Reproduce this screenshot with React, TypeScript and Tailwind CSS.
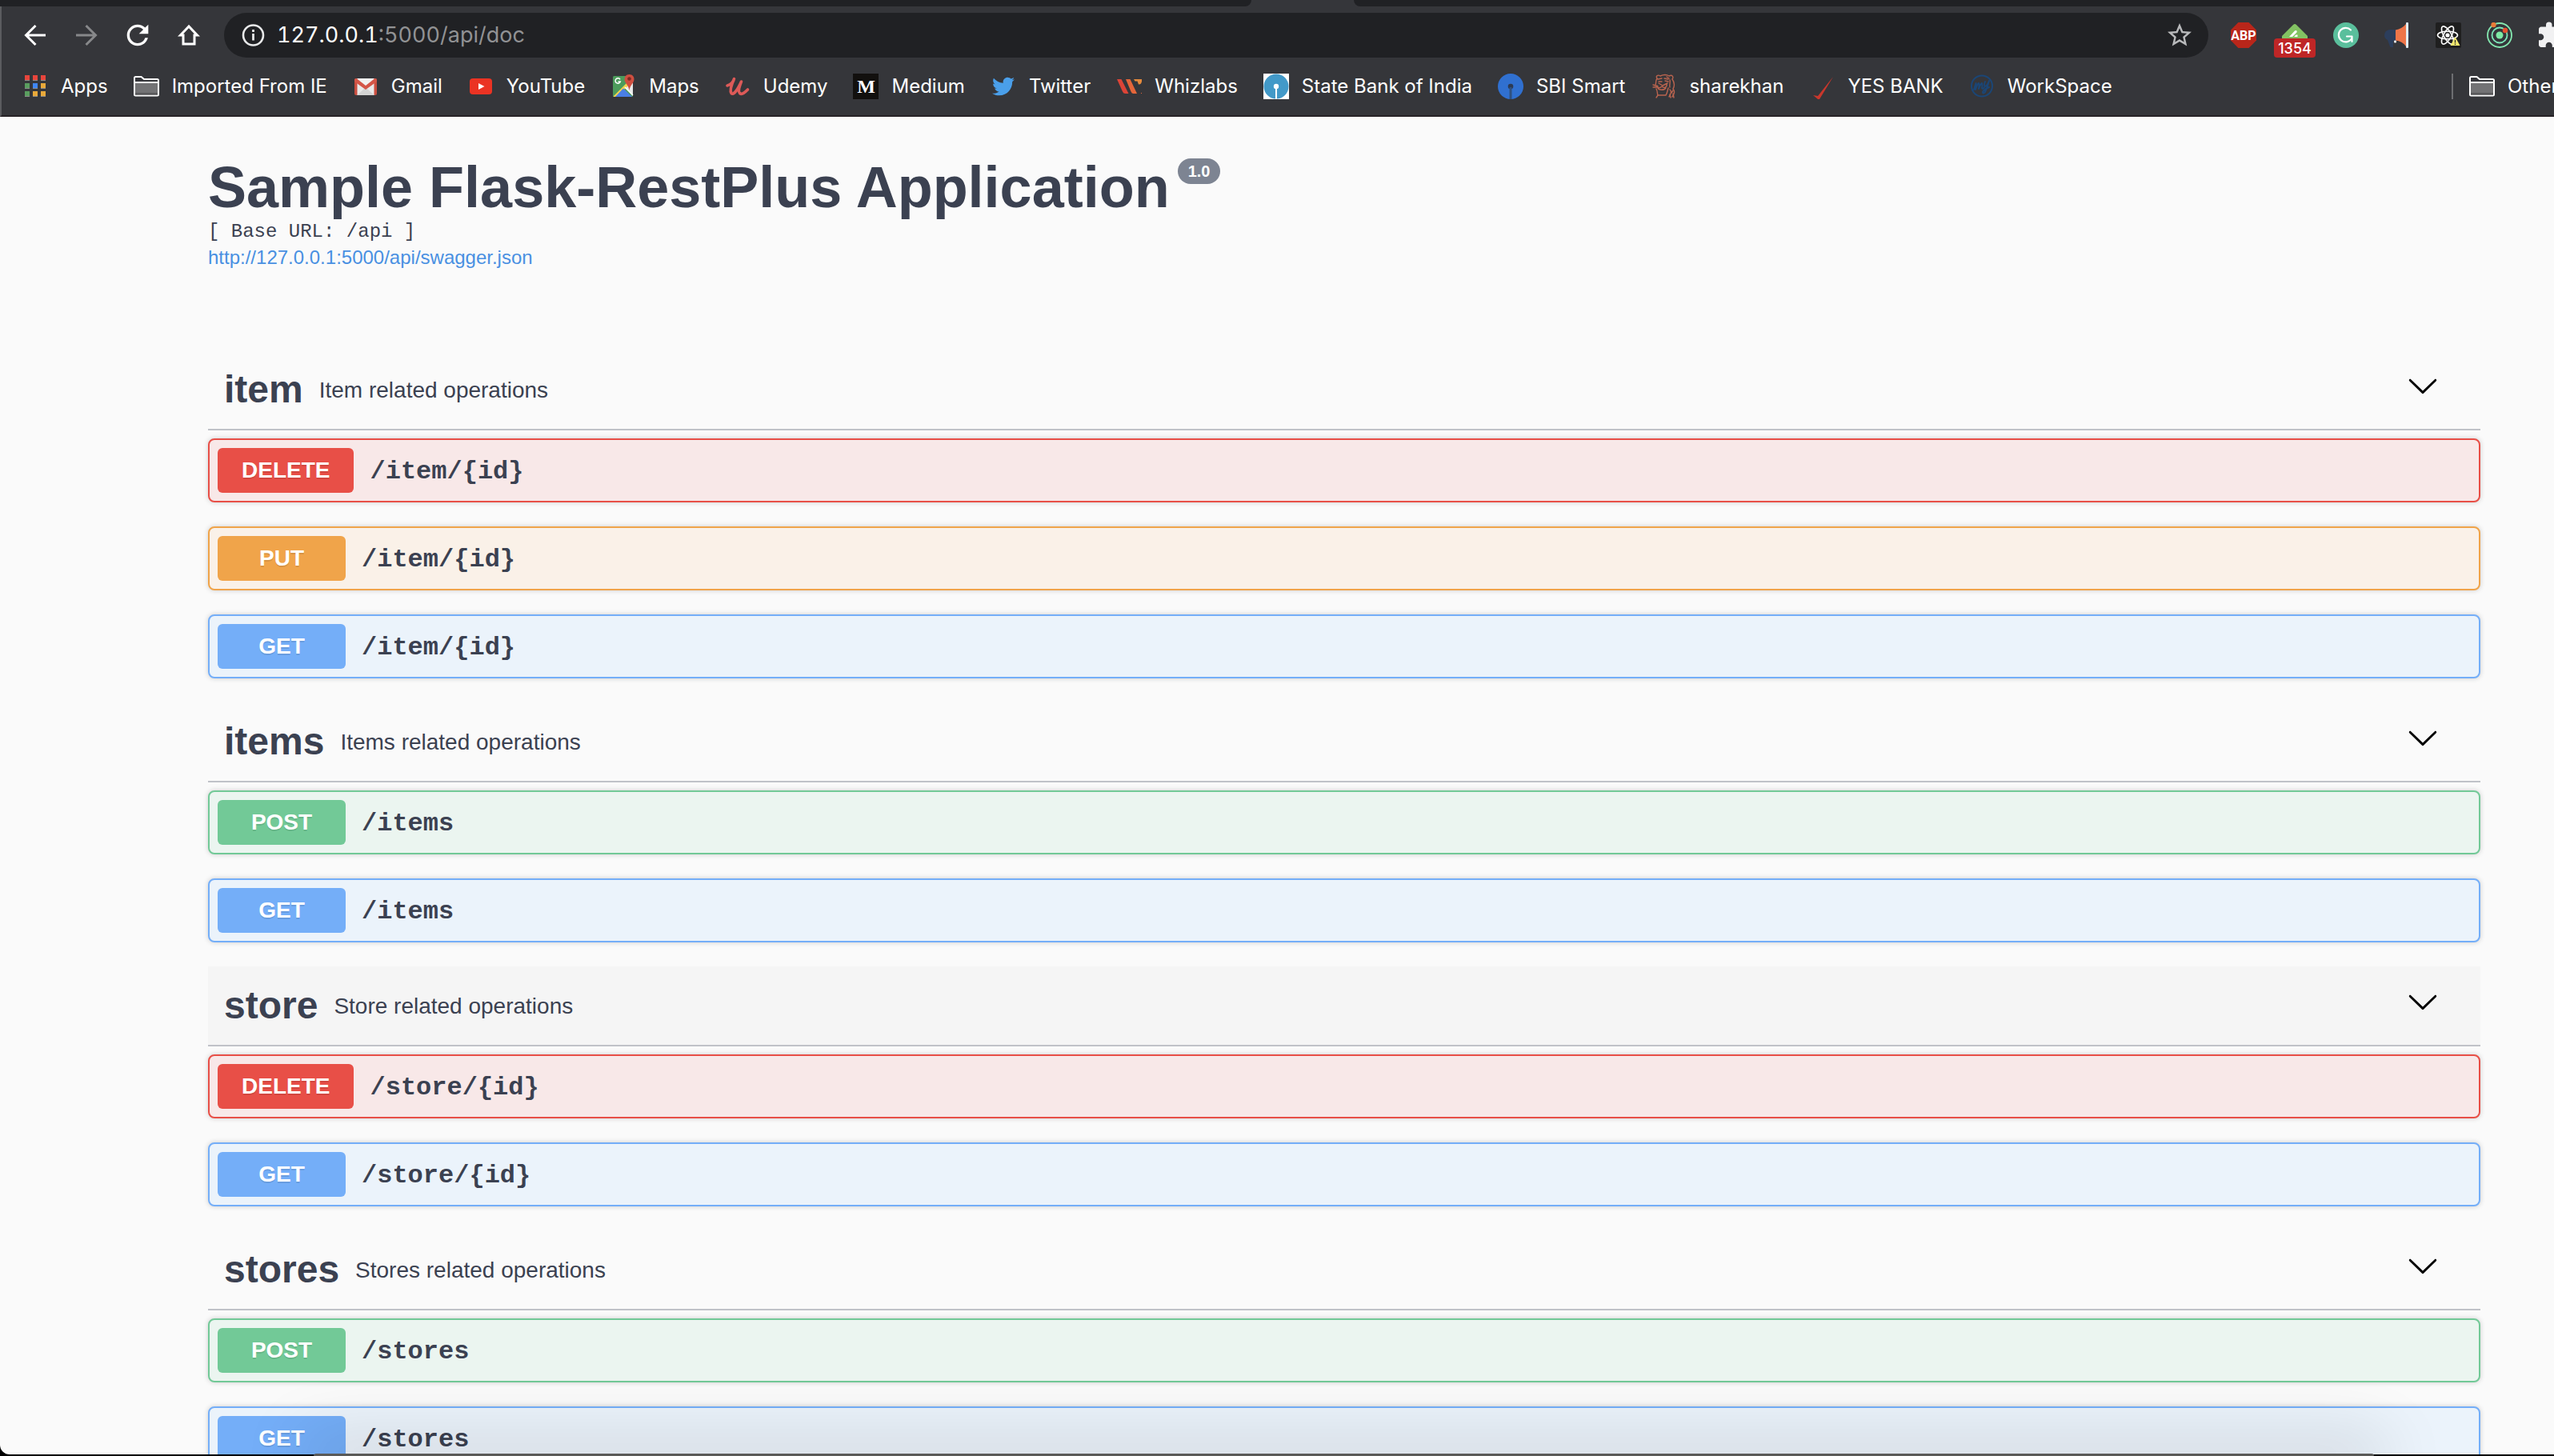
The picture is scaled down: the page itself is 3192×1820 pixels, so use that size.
import type { ReactNode } from "react";
import { FaTwitter } from "react-icons/fa";
import { MdExtension, MdRefresh, MdStarBorder } from "react-icons/md";

type Method = "DELETE" | "PUT" | "GET" | "POST";

const methodStyles: Record<Method, { card: string; badge: string }> = {
  DELETE: { card: "border-[#e84f47] bg-[#f8e8e8]", badge: "bg-[#e84f47]" },
  PUT: { card: "border-[#f0a44a] bg-[#faf1e8]", badge: "bg-[#f0a44a]" },
  GET: { card: "border-[#74aef8] bg-[#ebf3fb]", badge: "bg-[#74aef8]" },
  POST: { card: "border-[#72c997] bg-[#ebf5f0]", badge: "bg-[#72c997]" },
};

const sections: {
  name: string;
  description: string;
  hovered?: boolean;
  operations: { method: Method; path: string }[];
}[] = [
  {
    name: "item",
    description: "Item related operations",
    operations: [
      { method: "DELETE", path: "/item/{id}" },
      { method: "PUT", path: "/item/{id}" },
      { method: "GET", path: "/item/{id}" },
    ],
  },
  {
    name: "items",
    description: "Items related operations",
    operations: [
      { method: "POST", path: "/items" },
      { method: "GET", path: "/items" },
    ],
  },
  {
    name: "store",
    description: "Store related operations",
    hovered: true,
    operations: [
      { method: "DELETE", path: "/store/{id}" },
      { method: "GET", path: "/store/{id}" },
    ],
  },
  {
    name: "stores",
    description: "Stores related operations",
    operations: [
      { method: "POST", path: "/stores" },
      { method: "GET", path: "/stores" },
    ],
  },
];

function Icon({ children }: { children: ReactNode }) {
  return (
    <svg viewBox="0 0 32 32" className="size-8 shrink-0" fill="none" aria-hidden="true">
      {children}
    </svg>
  );
}

function AppsIcon() {
  const colors = ["#e8453c", "#e8453c", "#e8453c", "#5a9e5f", "#3f86f4", "#e9a93a", "#5a9e5f", "#e9a93a", "#e9a93a"];
  return (
    <Icon>
      {colors.map((color, i) => (
        <g key={i}>
          <rect x={3 + (i % 3) * 10} y={2 + Math.floor(i / 3) * 10} width="6" height="7" fill="#8b8b8b" />
          <rect x={3 + (i % 3) * 10} y={2 + Math.floor(i / 3) * 10} width="6" height="6" fill={color} />
        </g>
      ))}
    </Icon>
  );
}

function FolderIcon() {
  return (
    <Icon>
      <path d="M1 10V5.500Q1 4 2.500 4H9.500L13 7H29.500Q31 7 31 8.500V26Q31 27.500 29.500 27.500H2.500Q1 27.500 1 26Z" stroke="#fff" strokeWidth="2" />
      <rect x="2" y="12" width="28" height="12.500" fill="#737375" />
      <rect x="2" y="24.500" width="28" height="2" fill="#5b5b5d" />
      <path d="M1 11H31" stroke="#fff" strokeWidth="2" />
    </Icon>
  );
}

function GmailIcon() {
  return (
    <Icon>
      <rect x="2" y="6" width="28" height="21" rx="2" fill="#c94f41" />
      <path d="M5.500 6H26.500V27H5.500Z" fill="#e9e9e9" />
      <path d="M5.500 27L16 17L26.500 27Z" fill="#d3d3d3" />
      <path d="M2 7.500Q2.500 6 4.500 6L16 15L27.500 6Q29.500 6 30 7.500V10L16 20L2 10Z" fill="#d45648" />
      <path d="M5.500 6H26.500L16 14.500Z" fill="#f2f2f2" />
    </Icon>
  );
}

function YouTubeIcon() {
  return (
    <Icon>
      <rect x="2" y="6" width="28" height="20" rx="4" fill="#eb3323" />
      <path d="M13 12L20.500 16L13 20Z" fill="#fff" />
    </Icon>
  );
}

function MapsIcon() {
  return (
    <Icon>
      <rect x="3" y="3" width="25" height="26" rx="1.500" fill="#4c9b5b" />
      <path d="M28 11V28L17 16Z" fill="#e8e8e8" />
      <path d="M3.500 28.500L22 10L24.500 13L7 29H4Z" fill="#f3d34f" />
      <path d="M6 29L16 18.500L27 29Z" fill="#4a7fe6" />
      <path d="M18 17L28 27" stroke="#fff" strokeWidth="1.500" />
      <path d="M12 7.300A3.200 3.200 0 1 0 12.300 10H9.500" stroke="#fff" strokeWidth="1.500" />
      <path d="M23.500 1C19.500 1 17.500 4 17.500 7C17.500 12 22.500 14 23.500 21C24.500 14 29.500 12 29.500 7C29.500 4 27.500 1 23.500 1Z" fill="#cf4f40" />
      <circle cx="23.500" cy="6.500" r="2.300" fill="#7c2a22" />
    </Icon>
  );
}

function UdemyIcon() {
  return (
    <Icon>
      <path
        d="M3 15C7 14 11 10 11.500 6.500C9.500 11 5.500 21 8 24.500C10.500 27.500 15.500 21 20.500 10C18 16 16 22 18.500 24.500C21.500 27 25 23.500 28.500 20"
        stroke="#dd5a58"
        strokeWidth="3.600"
        strokeLinecap="round"
        strokeLinejoin="round"
      />
    </Icon>
  );
}

function MediumIcon() {
  return (
    <span
      className="flex size-8 shrink-0 items-center justify-center bg-[#12100e] font-['Liberation_Serif',serif] text-[24px] leading-8 font-bold text-white"
      aria-hidden="true"
    >
      M
    </span>
  );
}

function WhizlabsIcon() {
  return (
    <Icon>
      <path d="M1 7H6.500L15.500 25H11.500Q9 25 8 22.500Z" fill="#dc4437" />
      <path d="M12 7H17.500L26 25H31V24H32V25H21.500Q19.500 25 18.500 22.500Z" fill="#e4663a" />
      <path d="M22 7H32V10Q31 14 28 13.500L26.500 9.500H23.500Z" fill="#e58a3c" />
    </Icon>
  );
}

function StateBankIcon() {
  return (
    <Icon>
      <rect width="32" height="32" fill="#fff" />
      <circle cx="16" cy="16" r="15.500" fill="#4299c8" />
      <circle cx="16" cy="16" r="3.200" fill="#fff" />
      <rect x="15" y="17" width="2" height="15" fill="#fff" />
    </Icon>
  );
}

function SbiSmartIcon() {
  return (
    <Icon>
      <circle cx="16" cy="16" r="16" fill="#3070d0" />
      <circle cx="16" cy="16" r="3.300" fill="#2d3a52" />
      <rect x="14.500" y="17" width="3" height="15" fill="#2f507f" />
    </Icon>
  );
}

function SharekhanIcon() {
  return (
    <Icon>
      <g stroke="#b9644f" strokeWidth="1.400" strokeLinecap="round" strokeLinejoin="round">
        <path d="M8 6C6 3 9 1 12 3C16 1 20 1 23 3C27 1 29 4 27 7C30 11 30 16 28 19C31 23 29 26 27 29" />
        <path d="M8 6C6 9 7 12 6 14M9 7L14 6M17 6L22 7M10 10H14M18 9L22 10" />
        <path d="M10 12L15 15L21 12M8 15C8 19 12 18 14 16C17 19 21 17 20 13M9 18C10 21 17 21 19 18" />
        <path d="M3 14L9 16M3 17L8 17M7 19C9 23 8 25 9 27H19C21 24 21 21 22 18" />
        <path d="M24 8C25 12 23 14 24 17M24 20C27 22 25 26 23 29M9 27L7 30M28 21L26 24M20 4L23 6" />
        <path d="M28 25L29 30M24 26L25 30" />
      </g>
    </Icon>
  );
}

function YesBankIcon() {
  return (
    <Icon>
      <path d="M30 4L13 32H11L5 27L11 28Z" fill="#c9372c" />
    </Icon>
  );
}

function WorkSpaceIcon() {
  return (
    <Icon>
      <g stroke="#1b4676" strokeLinecap="round" strokeLinejoin="round">
        <circle cx="16" cy="15.500" r="13" strokeWidth="2" />
        <path d="M6 20L8.500 12L8 20Q10 13 12 12Q13 14 12 19Q14 13 16 12Q17 14 16 18Q17 20 19 17" strokeWidth="2" />
        <path d="M20 10Q18 15 20 16Q23 15 25 9Q23 17 20 23Q17 26 17 23Q18 20 25 17" strokeWidth="2" />
      </g>
    </Icon>
  );
}

const bookmarks: { label: string; icon: ReactNode }[] = [
  { label: "Apps", icon: <AppsIcon /> },
  { label: "Imported From IE", icon: <FolderIcon /> },
  { label: "Gmail", icon: <GmailIcon /> },
  { label: "YouTube", icon: <YouTubeIcon /> },
  { label: "Maps", icon: <MapsIcon /> },
  { label: "Udemy", icon: <UdemyIcon /> },
  { label: "Medium", icon: <MediumIcon /> },
  { label: "Twitter", icon: <FaTwitter className="size-8 shrink-0 p-0.5 text-[#4a9fea]" aria-hidden="true" /> },
  { label: "Whizlabs", icon: <WhizlabsIcon /> },
  { label: "State Bank of India", icon: <StateBankIcon /> },
  { label: "SBI Smart", icon: <SbiSmartIcon /> },
  { label: "sharekhan", icon: <SharekhanIcon /> },
  { label: "YES BANK", icon: <YesBankIcon /> },
  { label: "WorkSpace", icon: <WorkSpaceIcon /> },
];

function ToolButton({ label, children }: { label: string; children: ReactNode }) {
  return (
    <button type="button" aria-label={label} className="relative flex size-8 shrink-0 items-center justify-center">
      {children}
    </button>
  );
}

function Extensions() {
  return (
    <div className="-mr-3 flex shrink-0 items-center gap-8">
      <ToolButton label="Adblock Plus">
        <Icon>
          <path d="M9.400 0H22.600L32 9.400V22.600L22.600 32H9.400L0 22.600V9.400Z" fill="#b9261a" />
          <text x="16" y="22" textAnchor="middle" fill="#fff" fontSize="16" fontWeight="700" fontFamily="Roboto, sans-serif">
            ABP
          </text>
        </Icon>
      </ToolButton>
      <ToolButton label="Feedly">
        <Icon>
          <path d="M14 3Q16 1 18 3L32 17V20H0V17Z" fill="#83c262" />
          <path d="M9 18L16 10.500Q17.500 9.500 18.500 10.500Q19.300 12 18 13L13 18ZM15 18L17.500 15.500H19.500V18Z" fill="#fff" />
        </Icon>
        <span className="absolute -bottom-3 left-1/2 h-6 w-[52px] -translate-x-1/2 rounded-sm bg-[#bf2626] text-center text-[18px] leading-[26px] font-medium text-white">
          1354
        </span>
      </ToolButton>
      <ToolButton label="Grammarly">
        <Icon>
          <circle cx="16" cy="16" r="16" fill="#5abf9c" />
          <path d="M22 9.500A8.800 8.800 0 1 0 23 20.500" stroke="#fff" strokeWidth="2.200" strokeLinecap="round" />
          <path d="M17 17.500H23.500V24" stroke="#fff" strokeWidth="2.200" strokeLinecap="round" strokeLinejoin="round" />
        </Icon>
      </ToolButton>
      <ToolButton label="Announcements">
        <Icon>
          <rect x="27" y="11" width="4.500" height="9" rx="2" fill="#2c3e5c" />
          <path d="M15 9H7Q0 10 0 16Q0 20 4 22L7 30Q8 32 11 31L11 23H15Z" fill="#2c3e5c" />
          <path d="M14 9.500Q22 8 27 2V30Q22 23 14 22.500Z" fill="#ee7549" />
          <rect x="27" y="0" width="3" height="32" rx="1" fill="#dfecf5" />
          <rect x="12" y="22.500" width="3" height="3" rx="1" fill="#e9eef2" />
        </Icon>
      </ToolButton>
      <ToolButton label="React Developer Tools">
        <Icon>
          <rect width="32" height="32" rx="2" fill="#1f1f1f" />
          <g stroke="#fff" strokeWidth="1.600">
            <ellipse cx="15" cy="16" rx="12.500" ry="4.800" />
            <ellipse cx="15" cy="16" rx="12.500" ry="4.800" transform="rotate(60 15 16)" />
            <ellipse cx="15" cy="16" rx="12.500" ry="4.800" transform="rotate(120 15 16)" />
          </g>
          <circle cx="15" cy="16" r="2.600" fill="#fff" />
          <path d="M24.500 18L30.500 29H18.500Z" fill="#f5ea6f" />
          <path d="M24.500 22V25.500M24.500 26.500V28" stroke="#333" strokeWidth="1.400" />
        </Icon>
      </ToolButton>
      <ToolButton label="Orbit">
        <Icon>
          <circle cx="16" cy="16" r="15" stroke="#84e8b0" strokeWidth="1.800" />
          <circle cx="16" cy="16" r="9.500" stroke="#7ce6b8" strokeWidth="1.800" />
          <circle cx="16" cy="16" r="4.500" fill="#7de9a4" />
          <circle cx="8.500" cy="3" r="3.200" fill="#e97b38" />
          <circle cx="23" cy="10" r="3.200" fill="#e4502f" />
        </Icon>
      </ToolButton>
      <ToolButton label="Extensions">
        <MdExtension className="size-9 shrink-0 text-[#f1f1f2]" />
      </ToolButton>
    </div>
  );
}

function BrowserChrome() {
  return (
    <header className="shrink-0 bg-[#35363a] font-['Inter',sans-serif]">
      <div className="flex h-2">
        <div className="w-[49%] rounded-br-lg bg-[#202124]" />
        <div className="w-[4%]" />
        <div className="flex-1 rounded-bl-lg bg-[#202124]" />
      </div>
      <div className="border-b-2 border-l-2 border-b-[#262226] border-l-[#5b5c5f]">
        <div className="flex items-center gap-7 pt-2 pl-[26px]">
          <nav aria-label="Browser navigation" className="flex shrink-0 items-center gap-8">
            <ToolButton label="Back">
              <Icon>
                <path d="M29 16H5M16.500 4L4.500 16L16.500 28" stroke="#fff" strokeWidth="3" />
              </Icon>
            </ToolButton>
            <ToolButton label="Forward">
              <Icon>
                <path d="M3 16H27M15.500 4L27.500 16L15.500 28" stroke="#87888a" strokeWidth="3" />
              </Icon>
            </ToolButton>
            <ToolButton label="Reload">
              <MdRefresh className="size-10 shrink-0 text-white" />
            </ToolButton>
            <ToolButton label="Home">
              <Icon>
                <path d="M16 5L5.500 16H9V27H23V16H26.500Z" stroke="#fff" strokeWidth="3" />
              </Icon>
            </ToolButton>
          </nav>
          <div className="flex h-14 min-w-0 flex-1 items-center rounded-full bg-[#202124] pr-5 pl-5 text-[27px] leading-10 tabular-nums">
            <Icon>
              <circle cx="16.500" cy="16" r="12.500" stroke="#e8e9ea" strokeWidth="2.600" />
              <path d="M16.500 14V22.500M16.500 9V12" stroke="#e8e9ea" strokeWidth="2.800" />
            </Icon>
            <label htmlFor="address" className="ml-3.5 text-white">
              127.0.0.1
            </label>
            <input
              id="address"
              type="text"
              defaultValue=":5000/api/doc"
              className="h-10 min-w-0 flex-1 bg-transparent text-[#919294] tabular-nums outline-none"
            />
            <ToolButton label="Bookmark this page">
              <MdStarBorder className="size-9 shrink-0 text-[#b9babc]" />
            </ToolButton>
          </div>
          <Extensions />
        </div>
        <div className="flex items-center justify-between py-5 pl-[26px]">
          <nav aria-label="Bookmarks" className="flex min-w-0 items-center gap-8">
            {bookmarks.map(({ label, icon }) => (
              <a key={label} href="#" className="flex shrink-0 items-center gap-4 text-[24px] leading-8 text-white">
                {icon}
                {label}
              </a>
            ))}
          </nav>
          <div className="flex w-32 shrink-0 overflow-hidden border-l-2 border-[#6d6e71] pl-5">
            <a href="#" className="flex shrink-0 items-center gap-4 text-[24px] leading-8 text-white">
              <FolderIcon />
              Other
            </a>
          </div>
        </div>
      </div>
    </header>
  );
}

function Operation({ method, path }: { method: Method; path: string }) {
  const styles = methodStyles[method];
  return (
    <button
      type="button"
      className={`flex w-full items-center gap-5 rounded-lg border-2 p-2.5 text-left shadow-[0_0_6px_rgba(0,0,0,0.19)] ${styles.card}`}
    >
      <span
        className={`min-w-[160px] rounded-md px-[30px] py-3 text-center text-[28px] leading-8 font-bold text-white [text-shadow:0_2px_0_rgba(0,0,0,0.1)] ${styles.badge}`}
      >
        {method}
      </span>
      <span className="pt-1 font-['Liberation_Mono',monospace] text-[32px] leading-9 font-bold">{path}</span>
    </button>
  );
}

export default function App() {
  return (
    <div className="relative h-screen overflow-hidden bg-black pb-0.5">
      <div className="flex h-full flex-col overflow-hidden rounded-bl-xl bg-[#fafafa]">
        <BrowserChrome />
        <main className="min-h-0 flex-1 overflow-hidden pr-[92px] pl-[260px] font-['Liberation_Sans',sans-serif] text-[#3b4151]">
          <div className="pt-[52px] pb-[102px]">
            <div className="flex items-start gap-2.5">
              <h1 className="text-[72px] leading-[72px] font-bold">Sample Flask-RestPlus Application</h1>
              <span className="rounded-full bg-[#7d8492] px-[13px] text-[20px] leading-8 font-bold text-white">1.0</span>
            </div>
            <pre className="mt-1.5 font-['Liberation_Mono',monospace] text-[24px] leading-7">[ Base URL: /api ]</pre>
            <a href="#" className="mt-1 block text-[24px] leading-7 text-[#4990e2]">
              http://127.0.0.1:5000/api/swagger.json
            </a>
          </div>
          {sections.map(({ name, description, hovered, operations }) => (
            <section key={name}>
              <div
                className={`flex items-center gap-5 border-b-2 border-[#c0c2c8] py-[25px] pr-[52px] pl-5 ${hovered ? "bg-[#f5f5f5]" : ""}`}
              >
                <h2 className="text-[48px] leading-[48px] font-bold">{name}</h2>
                <p className="flex-1 pt-0.5 text-[28px] leading-8">{description}</p>
                <button type="button" aria-label={`Collapse ${name}`} className="-mt-2.5 size-10">
                  <svg viewBox="0 0 20 20" className="size-10" fill="#000" aria-hidden="true">
                    <path d="M17.418 6.109c.272-.268.709-.268.979 0s.271.701 0 .969l-7.908 7.830c-.270.268-.707.268-.979 0l-7.908-7.830c-.270-.268-.270-.701 0-.969.271-.268.709-.268.979 0L10 13.250l7.418-7.141z" />
                  </svg>
                </button>
              </div>
              <div className="flex flex-col gap-[30px] pt-2.5 pb-[30px]">
                {operations.map(({ method, path }) => (
                  <Operation key={method} method={method} path={path} />
                ))}
              </div>
            </section>
          ))}
        </main>
      </div>
      <div className="pointer-events-none absolute right-[225px] bottom-0 left-[392px] h-[3px] rounded-t-sm bg-[#5a5a58] shadow-[0_0_80px_16px_rgba(0,0,0,0.18)]" />
    </div>
  );
}
